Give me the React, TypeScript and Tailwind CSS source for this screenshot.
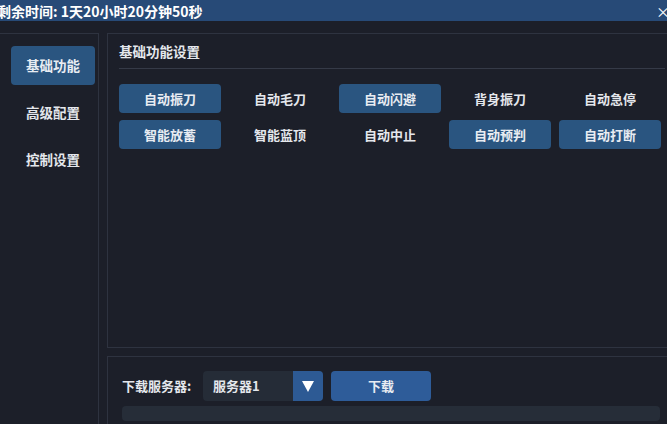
import React from "react";

const features: { label: string; on: boolean }[] = [
  { label: "自动振刀", on: true },
  { label: "自动毛刀", on: false },
  { label: "自动闪避", on: true },
  { label: "背身振刀", on: false },
  { label: "自动急停", on: false },
  { label: "智能放蓄", on: true },
  { label: "智能蓝顶", on: false },
  { label: "自动中止", on: false },
  { label: "自动预判", on: true },
  { label: "自动打断", on: true },
];

const menu = ["基础功能", "高级配置", "控制设置"];

export default function App() {
  return (
    <div
      className="flex h-[424px] w-[667px] flex-col overflow-hidden bg-[#1c1f29] text-[#e4e7ec]"
      style={{ fontFamily: '"Noto Sans CJK SC", "Noto Sans", sans-serif' }}
    >
      <div className="flex h-[21px] shrink-0 items-center justify-between bg-[#274a77] text-white">
        <span className="ml-[-3px] text-[14px] font-bold leading-none">剩余时间: 1天20小时20分钟50秒</span>
        <span className="mr-[-3px] text-[14px] leading-none">×</span>
      </div>

      <div className="flex min-h-0 flex-1 gap-2 pt-3">
        <aside className="mb-[-10px] ml-[-1px] flex w-[100px] shrink-0 flex-col gap-2 border border-l-0 border-[#2e3340] pl-3 pr-[3px] pt-3">
          {menu.map((m, i) => (
            <div
              key={m}
              className={
                "flex h-[39px] items-center justify-center rounded text-[13.5px] font-bold " +
                (i === 0 ? "bg-[#2a5580] text-[#e8ecf2]" : "text-[#e4e7ec]")
              }
            >
              {m}
            </div>
          ))}
        </aside>

        <main className="mr-[-10px] flex min-w-0 flex-1 flex-col gap-2">
          <section className="flex h-[315px] shrink-0 flex-col border border-[#2e3340] px-[11px]">
            <div className="flex h-[35px] items-center border-b border-[#353a47] text-[13.5px] font-bold">
              基础功能设置
            </div>
            <div className="mt-[15px] grid w-[542px] grid-cols-5 gap-x-2 gap-y-[7px]">
              {features.map((f) => (
                <div
                  key={f.label}
                  className={
                    "flex h-[29px] items-center justify-center rounded text-[13px] font-bold " +
                    (f.on ? "bg-[#2a5580] text-[#e8ecf2]" : "text-[#e4e7ec]")
                  }
                >
                  {f.label}
                </div>
              ))}
            </div>
          </section>

          <section className="mb-[-10px] flex flex-1 flex-col border border-[#2e3340] pl-[14px] pr-[16px] pt-[14px]">
            <div className="flex items-center">
              <span className="w-[81px] text-[13px] font-bold">下载服务器:</span>
              <div className="flex h-[30px] w-[120px] overflow-hidden rounded bg-[#252c37]">
                <span className="flex flex-1 items-center pl-[10px] text-[13px] font-bold">服务器1</span>
                <span className="flex w-[30px] items-center justify-center bg-[#2d5a94]">
                  <svg width="12" height="11" viewBox="0 0 12 11">
                    <path d="M0 0 H12 L6 11 Z" fill="#ffffff" />
                  </svg>
                </span>
              </div>
              <button className="ml-2 flex h-[30px] w-[100px] items-center justify-center rounded bg-[#2e5c99] text-[13px] font-bold text-[#e8ecf2]">
                下载
              </button>
            </div>
            <div className="mt-[5px] h-[15px] w-[538px] rounded bg-[#262d38]" />
          </section>
        </main>
      </div>
    </div>
  );
}
